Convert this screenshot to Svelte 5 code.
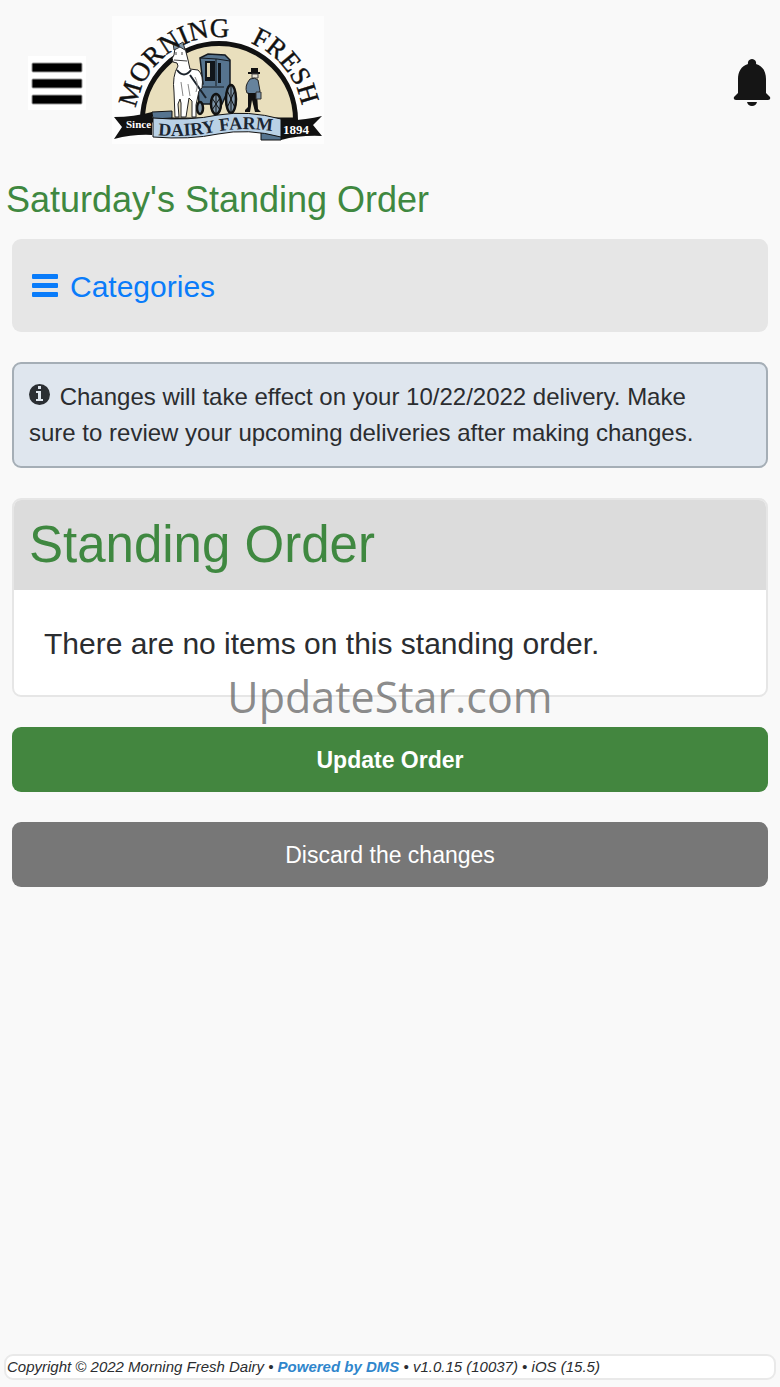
<script>
  let date = '10/22/2022'
  let version = 'v1.0.15 (10037)'
  let platform = 'iOS (15.5)'
  let items = []
</script>

<div class="page">
  <header>
    <button class="icon-btn menu" aria-label="Menu">
      <svg width="58" height="54" viewBox="0 0 58 54">
        <rect width="58" height="54" fill="#fff" />
        <g stroke="#999" stroke-width="1" fill="#000">
          <rect x="4" y="7" width="50" height="9" rx="1" />
          <rect x="4" y="23" width="50" height="9" rx="1" />
          <rect x="4" y="39" width="50" height="9" rx="1" />
        </g>
      </svg>
    </button>

    <a class="logo" href="#home" aria-label="Morning Fresh Dairy Farm">
      <svg width="212" height="128" viewBox="112 16 212 128">
        <defs>
          <path id="arc" d="M135 121 A84 84 0 0 1 303 121" />
          <path id="wave" d="M158 135 Q184 138 214 132 Q246 126 282 133" />
        </defs>
        <rect x="112" y="16" width="212" height="128" fill="#fdfdfd" />

        <!-- arch -->
        <path d="M142.500 120 A76.500 76.500 0 0 1 295.500 120 Z" fill="#e9dfbd" stroke="#111" stroke-width="5" />

        <!-- carriage -->
        <path d="M200 58 L208 54 L225 55 L230 60 L230 86 L222 104 L199 104 L198 86 L203 84 Z" fill="#56748f" stroke="#151a20" stroke-width="1.500" />
        <path d="M205 61 H215 V81 H205 Z M218 63 H221 V83 H218 Z" fill="#11161c" />
        <path d="M207 63 H210 V77 H207 Z" fill="#d9d0b0" />
        <path d="M199 87 H224 M200 58 L217 59 L230 61 M216 59 V86" fill="none" stroke="#151a20" stroke-width="1" />
        <g fill="#7d94a8" stroke="#111" stroke-width="2.500">
          <ellipse cx="200" cy="108" rx="3" ry="6" />
          <ellipse cx="216" cy="104" rx="5" ry="10" />
          <ellipse cx="231" cy="99" rx="5" ry="14" />
        </g>
        <path d="M216 94 V114 M212 98 L220 110 M220 98 L212 110 M231 85 V113 M227 90 L235 108 M235 90 L227 108" stroke="#111" stroke-width="1" />

        <!-- milkman -->
        <path d="M251 68 H258 V72 H260 V74 H248 V72 H251 Z" fill="#111" />
        <path d="M252 74 H258 V78 H252 Z" fill="#e8e3d4" stroke="#444" stroke-width="1" />
        <path d="M250 79 Q255 77 258 80 L260 91 L257 95 L247 93 Q244 86 250 79 Z" fill="#66839d" stroke="#222" stroke-width="1" />
        <path d="M248 93 H257 L258 109 L261 112 H255 L252 100 L250 112 H245 V110 L248 107 Z" fill="#111" />
        <path d="M256 92 H261 V99 H256 Z" fill="#7a93aa" stroke="#333" stroke-width="1" />

        <!-- horse -->
        <path d="M175 48 Q180 43 185 48 L188 60 L190 69 L198 70 Q204 75 202 88 L199 91 L196 105 L196 117 H192 L192 101 L189 98 L186 117 H181 L181 103 L180 99 L178 104 L179 117 H175 L174 92 Q172 76 178 66 L177 63 L173 62 Q171 58 174 55 Z" fill="#fff" stroke="#222" stroke-width="1" />
        <path d="M174 50 L173 43 L178 45 L183 42 L185 50 L180 47 Z" fill="#8297aa" stroke="#333" stroke-width="1" />
        <path d="M177 70 Q184 79 191 70 M190 75 L206 98" fill="none" stroke="#1a222b" stroke-width="2" />
        <path d="M174 60 L187 61 M176 52 V55 M182 52 V55" fill="none" stroke="#444" stroke-width="1" />
        <path d="M181 82 L183 96 M188 84 L190 96 M195 77 Q199 84 196 92" fill="none" stroke="#888" stroke-width="1" />

        <g font-family="Liberation Serif, serif" fill="#111" stroke="#111" stroke-width=".4">
          <text font-size="27"><textPath href="#arc" startOffset="13">MORNING</textPath></text>
          <text font-size="27"><textPath href="#arc" startOffset="164">FRESH</textPath></text>
        </g>

        <!-- ribbon -->
        <path d="M114 117 Q134 117 152 112 V135 Q134 134 114 139 L122 127 Z" fill="#111" />
        <path d="M152 112 L172 111 V118 L153 119 Z" fill="#56748f" stroke="#111" stroke-width="1" />
        <path d="M281 120 Q303 121 322 116 L313 125 L322 136 Q300 135 281 140 Z" fill="#111" />
        <path d="M261 131 L281 134 V140 H261 Z" fill="#56748f" stroke="#111" stroke-width="1" />
        <path d="M153 118 Q190 121 218 115 Q248 110 281 119 V137 Q248 128 218 134 Q190 140 153 137 Z" fill="#b9d1e6" stroke="#111" stroke-width="1" />
        <g font-family="Liberation Serif, serif" font-weight="bold">
          <text x="126" y="128" font-size="11" fill="#fff">Since</text>
          <text x="283" y="134" font-size="13" fill="#fff">1894</text>
          <text font-size="18" fill="#1c2733"><textPath href="#wave">DAIRY FARM</textPath></text>
        </g>
      </svg>
    </a>

    <button class="icon-btn bell" aria-label="Notifications">
      <svg width="38" height="48" viewBox="0 0 38 48">
        <path fill="#151515" d="M19 0 a4 4 0 0 1 4 5 C30 7 33 13 33 20 V34 L37 38 Q38 41 35 41 H3 Q0 41 1 38 L5 34 V20 C5 13 8 7 15 5 A4 4 0 0 1 19 0 Z M14 43 H24 Q23 47 19 47 Q15 47 14 43 Z" />
      </svg>
    </button>
  </header>

  <main>
    <h1>Saturday's Standing Order</h1>

    <nav>
      <a href="#categories">
        <svg width="26" height="26" viewBox="0 0 26 26" fill="currentColor">
          <rect width="26" height="5" rx="1" />
          <rect y="9" width="26" height="5" rx="1" />
          <rect y="18" width="26" height="5" rx="1" />
        </svg>
        Categories
      </a>
    </nav>

    <p class="notice">
      <svg width="21" height="21" viewBox="0 0 21 21">
        <circle cx="10.500" cy="10.500" r="10.500" fill="#2b2f33" />
        <path fill="#dfe6ee" d="M9 2 H12 V5 H9 Z M7 7 H12 V15 H14 V17 H7 V15 H9 V9 H7 Z" />
      </svg>
      Changes will take effect on your {date} delivery. Make sure to review your upcoming deliveries after making changes.
    </p>

    <section class="card">
      <h2>Standing Order</h2>
      {#each items as item}
        <p>{item.name}</p>
      {:else}
        <p>There are no items on this standing order.</p>
      {/each}
      <span class="watermark">UpdateStar.com</span>
    </section>

    <button class="btn update">Update Order</button>
    <button class="btn discard">Discard the changes</button>
  </main>

  <footer>
    Copyright © 2022 Morning Fresh Dairy • <a href="#dms">Powered by DMS</a> • {version} • {platform}
  </footer>
</div>

<style>
  :global(body) {
    background: #f9f9f9;
  }

  .page {
    display: flex;
    flex-direction: column;
    box-sizing: border-box;
    min-height: 100vh;
    padding-bottom: 7px;
    font-family: "Liberation Sans", Arial, sans-serif;
    color: #2b2d30;
  }

  header {
    display: flex;
    align-items: center;
    padding: 16px 9px 0 28px;
  }

  .icon-btn {
    margin-top: 6px;
    padding: 0;
    border: 0;
    background: none;
    cursor: pointer;
  }

  svg {
    display: block;
    overflow: visible;
  }

  .logo {
    margin-left: 26px;
  }

  .bell {
    margin-left: auto;
  }

  main {
    display: flex;
    flex-direction: column;
    flex: 1;
    padding: 0 12px;
  }

  h1 {
    margin: 32px -6px 16px;
    font-size: 36px;
    font-weight: normal;
    line-height: 47px;
    color: #3f8840;
  }

  nav {
    padding: 29px 20px 27px;
    border-radius: 9px;
    background: #e6e6e6;
  }

  nav a {
    display: flex;
    align-items: center;
    gap: 12px;
    font-size: 30px;
    line-height: 37px;
    color: #0a7cfa;
    text-decoration: none;
  }

  .notice {
    margin: 30px 0;
    padding: 15px 40px 15px 15px;
    border: 2px solid #a5aeb6;
    border-radius: 9px;
    background: #dfe6ee;
    font-size: 24px;
    line-height: 36px;
  }

  .notice svg {
    display: inline-block;
    margin-right: 3px;
  }

  .card {
    position: relative;
    border: 2px solid #e6e6e6;
    border-radius: 9px;
    background: #fff;
  }

  h2 {
    margin: 0;
    padding: 15px;
    border-radius: 7px 7px 0 0;
    background: #dcdcdc;
    font-size: 51px;
    font-weight: normal;
    line-height: 60px;
    color: #3f8840;
  }

  .card p {
    margin: 0;
    padding: 31px 30px 29px;
    font-size: 30px;
    line-height: 45px;
  }

  .watermark {
    position: absolute;
    bottom: -34px;
    left: 0;
    right: 0;
    font-family: "Open Sans", "Noto Sans", sans-serif;
    font-size: 43px;
    line-height: 64px;
    text-align: center;
    color: rgba(90, 90, 90, .7);
    pointer-events: none;
  }

  .btn {
    margin-top: 30px;
    padding: 2px 6px 0;
    height: 65px;
    border: 0;
    border-radius: 9px;
    font-family: inherit;
    font-size: 23px;
    color: #fff;
    cursor: pointer;
  }

  .update {
    background: #43863f;
    font-weight: bold;
  }

  .discard {
    background: #777;
  }

  footer {
    margin: 0 4px;
    padding-left: 1px;
    border: 2px solid #e9e9e9;
    border-radius: 9px;
    background: #fff;
    font-size: 15px;
    font-style: italic;
    line-height: 22px;
  }

  footer a {
    font-weight: bold;
    color: #2f86cc;
    text-decoration: none;
  }
</style>
